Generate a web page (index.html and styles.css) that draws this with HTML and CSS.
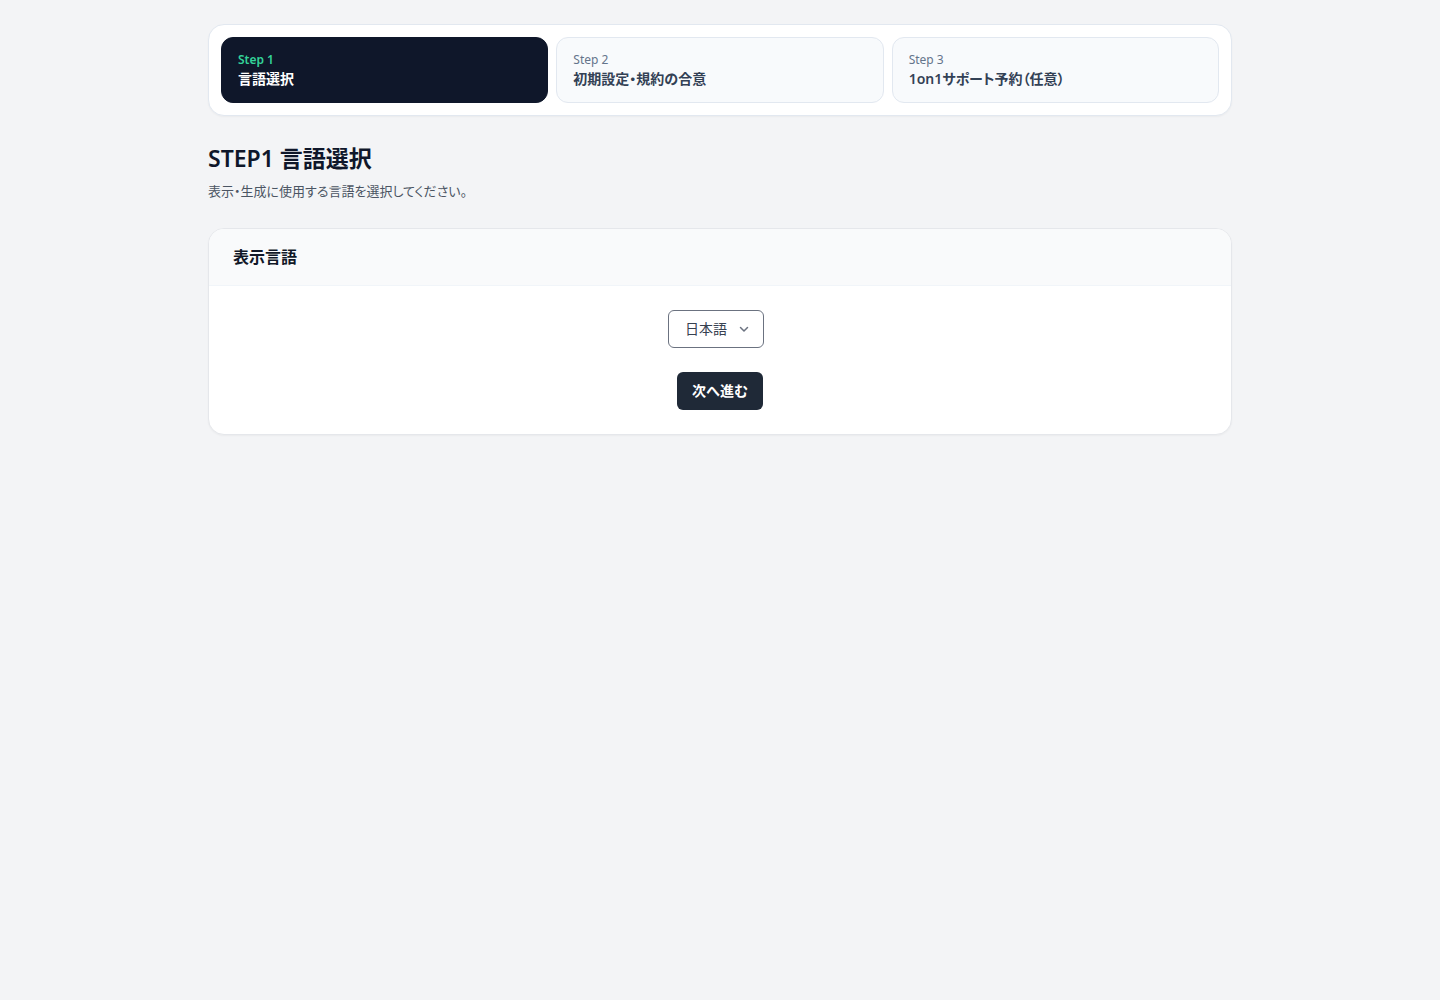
FILE: index.html
```html
<!DOCTYPE html>
<html lang="ja">
<head>
<meta charset="utf-8">
<title>STEP1 言語選択</title>
<link rel="stylesheet" href="styles.css">
</head>
<body>
<main class="page">
  <nav class="stepper">
    <div class="step step-active">
      <div class="step-label">Step 1</div>
      <div class="step-title">言語選択</div>
    </div>
    <div class="step">
      <div class="step-label">Step 2</div>
      <div class="step-title">初期設定・規約の合意</div>
    </div>
    <div class="step">
      <div class="step-label">Step 3</div>
      <div class="step-title">1on1サポート予約（任意）</div>
    </div>
  </nav>

  <header class="intro">
    <h1 class="title">STEP1 言語選択</h1>
    <p class="subtitle">表示・生成に使用する言語を選択してください。</p>
  </header>

  <section class="card">
    <div class="card-head">表示言語</div>
    <div class="card-body">
      <div class="select-wrap">
        <select class="select">
          <option>日本語</option>
          <option>English</option>
        </select>
        <svg class="chev" width="12" height="12" viewBox="0 0 12 12" fill="none" stroke="#6b7280" stroke-width="1.5" stroke-linecap="round" stroke-linejoin="round"><path d="M2.5 4.5 6 8l3.5-3.5"/></svg>
      </div>
      <button class="btn">次へ進む</button>
    </div>
  </section>
</main>
</body>
</html>
```

FILE: styles.css
```css
* { box-sizing: border-box; }
html, body { margin: 0; padding: 0; }
body {
  background: #f3f4f6;
  font-family: "Noto Sans", "Noto Sans CJK JP", sans-serif;
  font-feature-settings: "palt";
  color: #0f172a;
  min-height: 1000px;
}
.page {
  width: 1024px;
  margin: 0 auto;
  padding-top: 24px;
}
.stepper {
  display: grid;
  grid-template-columns: repeat(3, 1fr);
  gap: 8px;
  background: #fff;
  border: 1px solid #e2e8f0;
  border-radius: 16px;
  padding: 12px;
  box-shadow: 0 1px 2px rgba(0,0,0,0.04);
}
.step {
  border: 1px solid #e2e8f0;
  background: #f8fafc;
  border-radius: 12px;
  padding: 14px 16px 0;
  height: 66px;
}
.step-active {
  background: #0f172a;
  border-color: #0f172a;
}
.step-label {
  font-size: 12px;
  line-height: 16px;
  color: #64748b;
}
.step-title {
  margin-top: 1px;
  font-size: 14px;
  line-height: 20px;
  font-weight: 600;
  color: #334155;
}
.step-active .step-label { color: #34d399; font-weight: 600; }
.step-active .step-title { color: #fff; }

.intro { margin-top: 24px; }
.title {
  margin: 0;
  font-size: 23px;
  line-height: 36px;
  font-weight: 600;
  color: #0f172a;
}
.subtitle {
  margin: 5px 0 0;
  font-size: 13px;
  line-height: 20px;
  color: #4b5563;
}
.card {
  margin-top: 27px;
  background: #fff;
  border: 1px solid #e5e7eb;
  border-radius: 16px;
  overflow: hidden;
  box-shadow: 0 1px 2px rgba(0,0,0,0.04);
}
.card-head {
  background: #f9fafb;
  border-bottom: 1px solid #f1f5f9;
  padding: 0 24px 2px;
  height: 57px;
  display: flex;
  align-items: center;
  font-size: 16px;
  font-weight: 600;
  color: #111827;
}
.card-body {
  padding: 24px;
  display: flex;
  flex-direction: column;
  align-items: center;
  gap: 24px;
}
.select-wrap {
  position: relative;
  width: 96px;
  height: 38px;
  margin-right: 8px;
}
.select {
  appearance: none;
  -webkit-appearance: none;
  width: 100%;
  height: 100%;
  border: 1px solid #6b7280;
  border-radius: 6px;
  background: #fff;
  padding: 0 30px 2px 16px;
  font-family: inherit;
  font-size: 14px;
  color: #374151;
}
.chev {
  position: absolute;
  right: 14px;
  top: 13px;
  pointer-events: none;
}
.btn {
  height: 38px;
  width: 86px;
  border: 0;
  border-radius: 6px;
  background: #1f2937;
  color: #fff;
  padding: 0 0 2px;
  font-family: inherit;
  font-size: 14px;
  font-weight: 600;
}
```
